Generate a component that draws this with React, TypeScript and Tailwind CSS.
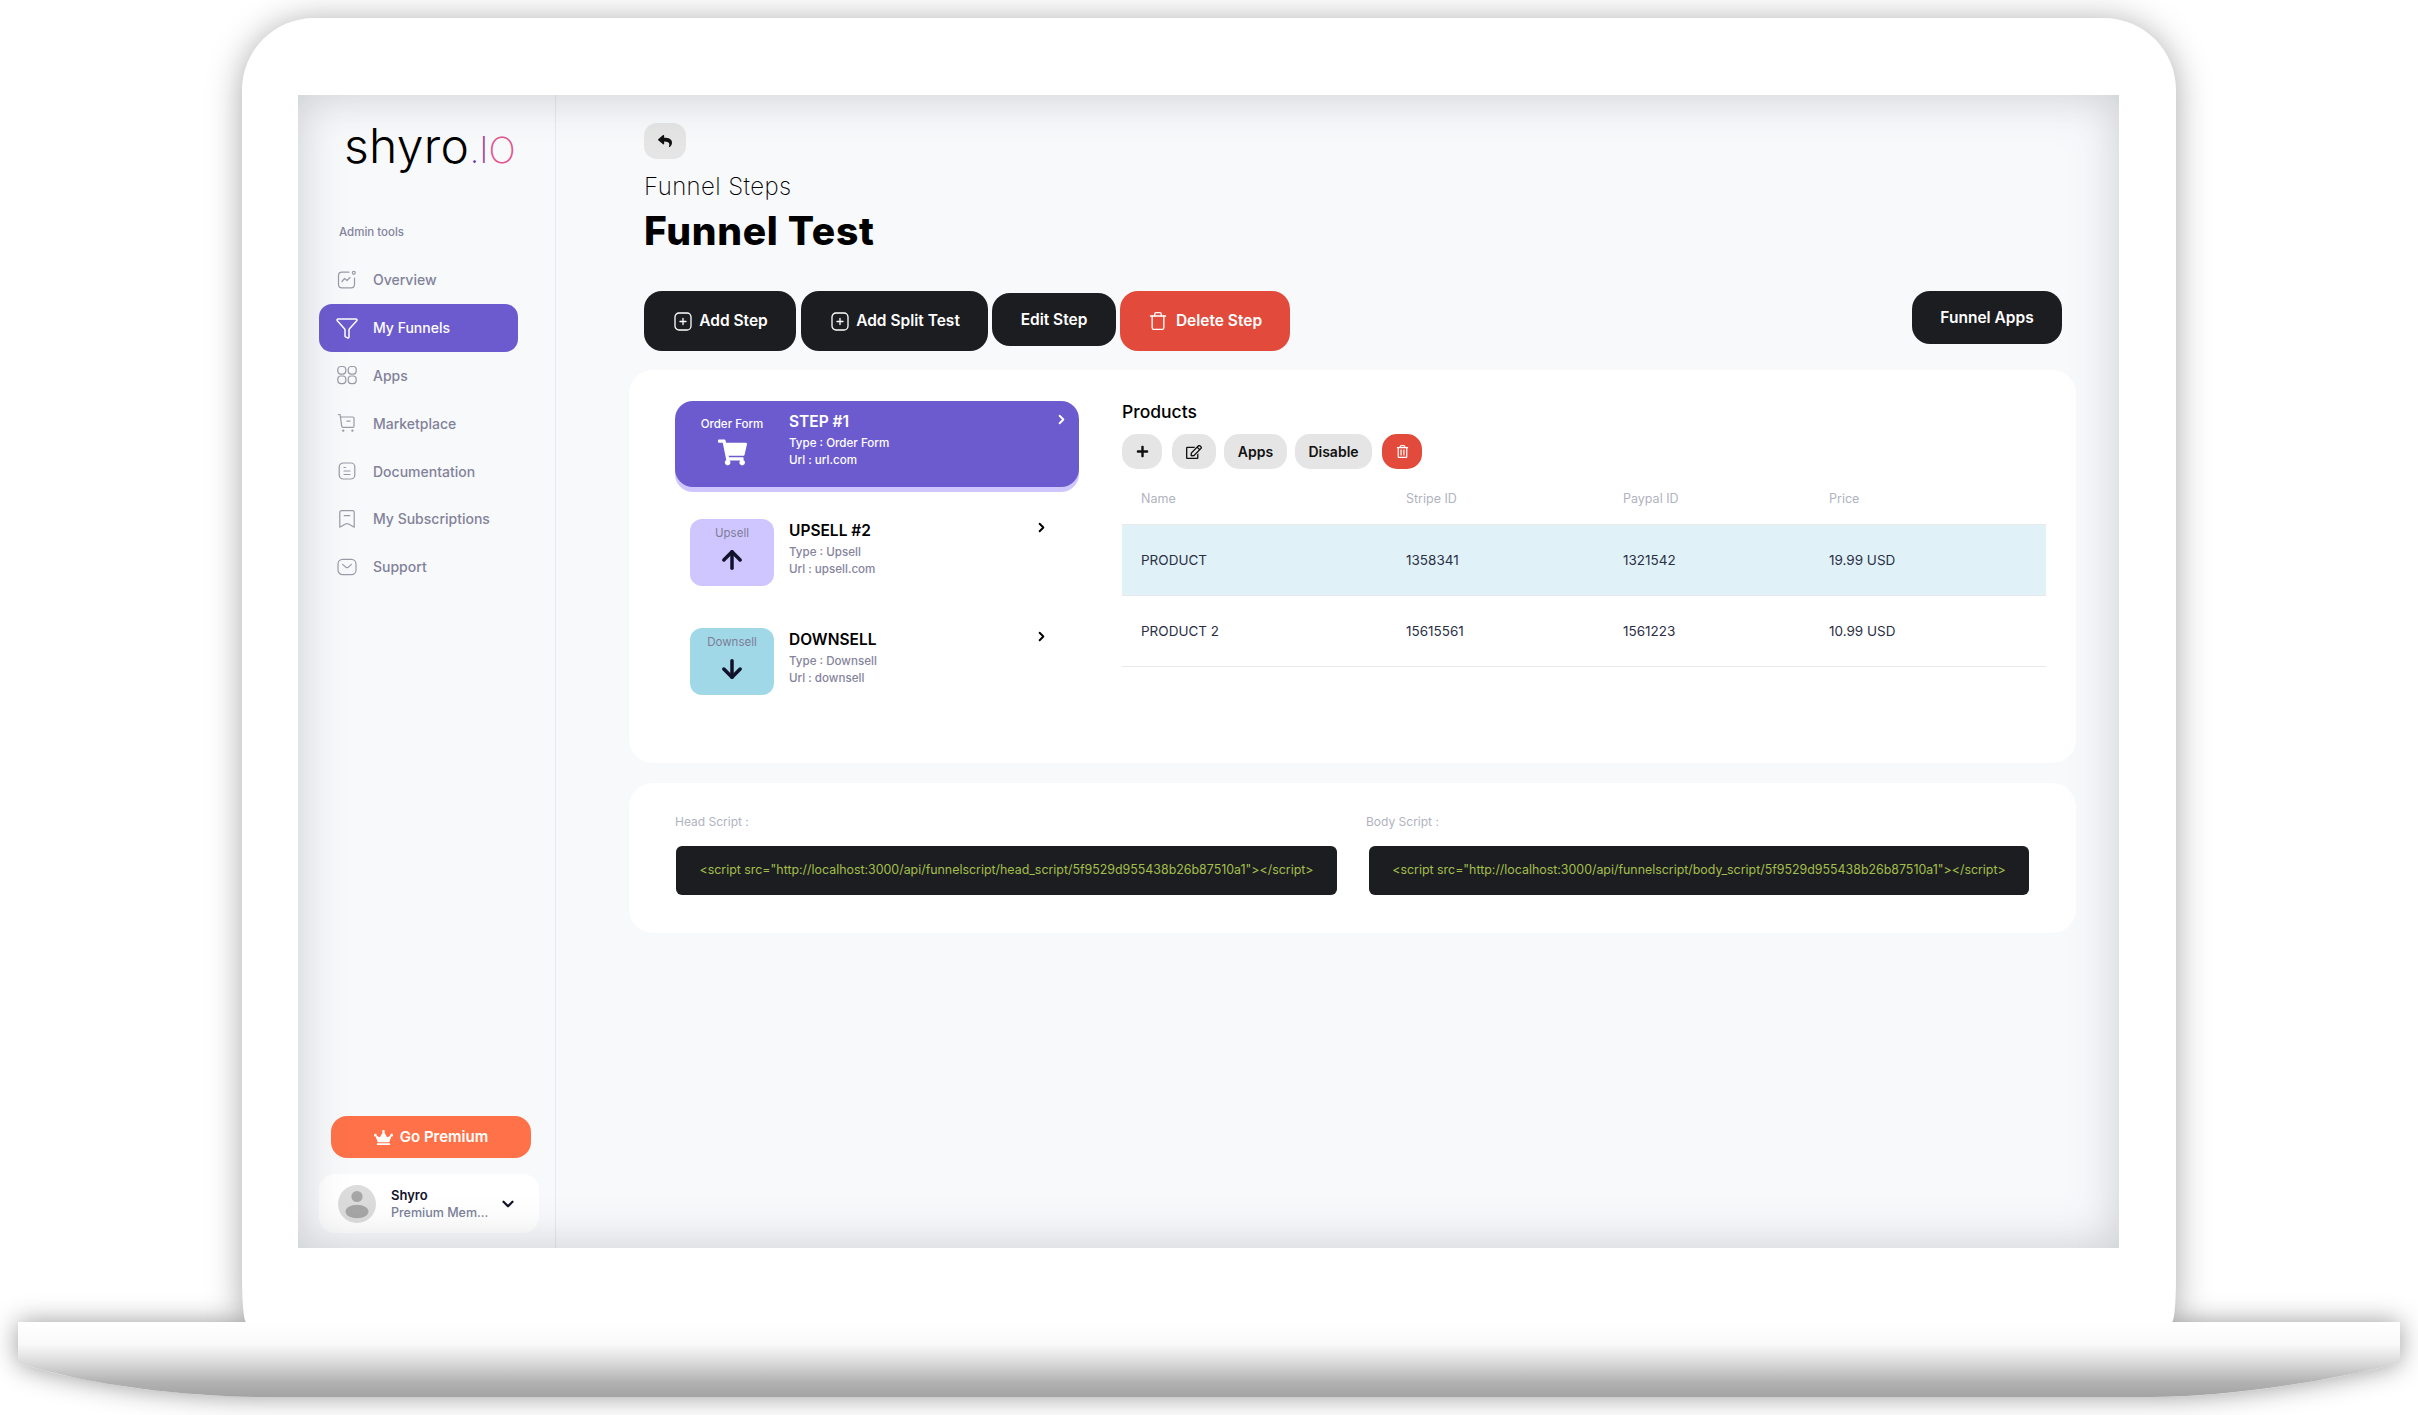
import React from "react";
import { ArrowUp, ArrowDown, ChevronRight, ChevronDown, Trash, Filter } from "lucide-react";
import { FaShoppingCart, FaReply, FaRegEdit, FaRegTrashAlt, FaCrown, FaPlus } from "react-icons/fa";

const BASE_PATH = "M0 0H2382V41C2300 62 2200 75 2133 75H249C180 75 80 66 0 41Z";

const Ico = ({ children }: { children: React.ReactNode }) => (
  <svg width="20" height="20" viewBox="0 0 20 20" fill="none" stroke="currentColor" strokeWidth="1.2" strokeLinecap="round" strokeLinejoin="round">
    {children}
  </svg>
);

const nav: { label: string; icon: React.ReactNode; active?: boolean }[] = [
  {
    label: "Overview",
    icon: (
      <Ico>
        <path d="M12 2.2H5C2.8 2.2 1.5 3.6 1.5 5.6v8.6c0 2.2 1.4 3.6 3.5 3.6h9c2.1 0 3.5-1.4 3.5-3.6V8" />
        <circle cx="16.8" cy="2.8" r="1.5" />
        <path d="M5 11.5l2.6-3 2.4 2 3-3" />
      </Ico>
    ),
  },
  {
    label: "My Funnels",
    active: true,
    icon: <Filter size={24} strokeWidth={1.5} className="-mx-[2px]" />,
  },
  {
    label: "Apps",
    icon: (
      <Ico>
        <rect x="0.8" y="1.5" width="8" height="7.6" rx="3" />
        <rect x="11.2" y="1.5" width="8" height="7.6" rx="3" />
        <rect x="0.8" y="11" width="8" height="7.6" rx="3" />
        <rect x="11.2" y="11" width="8" height="7.6" rx="3" />
      </Ico>
    ),
  },
  {
    label: "Marketplace",
    icon: (
      <Ico>
        <path d="M1.5 1.5h1.6l1.6 11.6c.1.8.7 1.3 1.5 1.3h9.6c.7 0 1.2-.5 1.2-1.2V5.2c0-.7-.5-1.2-1.2-1.2H3.3" />
        <path d="M10 8.2h3" />
        <circle cx="6.2" cy="17.6" r=".6" />
        <circle cx="15.4" cy="17.6" r=".6" />
      </Ico>
    ),
  },
  {
    label: "Documentation",
    icon: (
      <Ico>
        <rect x="2.2" y="2" width="15.6" height="16" rx="4" />
        <path d="M7 6.5h1.6M7 10h6M7 13.5h6" />
      </Ico>
    ),
  },
  {
    label: "My Subscriptions",
    icon: (
      <Ico>
        <path d="M4.5 1.6h11c1 0 1.7.7 1.7 1.7v14.9l-5.6-3.2c-1-.6-2.2-.6-3.2 0l-5.6 3.2V3.3c0-1 .7-1.7 1.7-1.7z" />
        <path d="M7.2 6.6h5.6" />
      </Ico>
    ),
  },
  {
    label: "Support",
    icon: (
      <Ico>
        <rect x="1" y="2.4" width="18" height="15.2" rx="4.6" />
        <path d="M5.5 7.4l3.4 2.8c.7.5 1.5.5 2.2 0l3.4-2.8" />
      </Ico>
    ),
  },
];

const AddIcon = () => (
  <svg width="18" height="19" viewBox="0 0 18 19" fill="none" stroke="currentColor" strokeWidth="1.3" strokeLinecap="round">
    <rect x="1" y="1" width="16" height="17" rx="4" />
    <path d="M9 6.5v6M6 9.5h6" />
  </svg>
);

const DarkButton = ({ children, className }: { children: React.ReactNode; className: string }) => (
  <button className={"flex items-center justify-center gap-[7px] rounded-[18px] bg-[#1c1d21] text-[15.5px] font-semibold text-white " + className}>
    {children}
  </button>
);

const Sidebar = () => (
  <aside className="flex w-[258px] shrink-0 flex-col border-r border-[#e6e8ec]">
    <div className="mt-[27px] ml-[46px] flex h-[70px] items-baseline leading-none">
      <span className="text-[48px] font-light tracking-[0.3px] text-black">shyro</span>
      <span className="text-[36px] font-extralight text-[#6b3fa0]">.</span>
      <span className="text-[36px] font-extralight text-[#a0459a]">I</span>
      <span className="text-[36px] font-extralight text-[#e0558f]">O</span>
    </div>
    <div className="mt-[32px] ml-[41px] h-[16px] text-[11.5px] leading-[16px] font-medium text-[#84849c]">Admin tools</div>
    <nav className="mt-[16px] ml-[21px] w-[199px]">
      {nav.map((n) => (
        <div
          key={n.label}
          className={
            "flex h-[47.8px] items-center gap-[16px] rounded-[13px] pl-[18px] text-[14px] font-medium " +
            (n.active ? "bg-[#6c5bcf] text-white" : "text-[#82829a]")
          }
        >
          <span className={n.active ? "text-white" : "text-[#9a9aa8]"}>{n.icon}</span>
          {n.label}
        </div>
      ))}
    </nav>
    <button className="mt-auto ml-[33px] flex h-[42px] w-[200px] items-center justify-center gap-[7px] rounded-[16px] bg-[#ff7249] text-[15px] font-semibold text-white">
      <FaCrown size={19} />
      Go Premium
    </button>
    <div className="mt-[16px] mb-[15px] ml-[21px] flex h-[59px] w-[220px] items-center rounded-[16px] bg-white pl-[19px]">
      <svg width="38" height="38" viewBox="0 0 38 38">
        <circle cx="19" cy="19" r="19" fill="#dcdcdc" />
        <circle cx="19" cy="11.5" r="5.6" fill="#a6a6a6" />
        <ellipse cx="19" cy="26.5" rx="11.5" ry="6.8" fill="#a6a6a6" />
      </svg>
      <div className="ml-[15px] w-[100px]">
        <div className="text-[13px] leading-[17px] font-semibold text-[#12132b]">Shyro</div>
        <div className="truncate text-[12.5px] leading-[17px] font-medium text-[#7b7f9a]">Premium Mem...</div>
      </div>
      <ChevronDown size={18} strokeWidth={3} className="ml-[8px] text-[#12132b]" />
    </div>
  </aside>
);

const StepInfo = ({ title, type, url, active }: { title: string; type: string; url: string; active?: boolean }) => (
  <div className="ml-[15px]">
    <div className={"text-[15.5px] leading-[20px] font-semibold " + (active ? "text-white" : "text-black")}>{title}</div>
    <div className={"mt-[3px] text-[11.6px] leading-[17px] font-medium " + (active ? "text-white" : "text-[#84849c]")}>{type}</div>
    <div className={"text-[11.6px] leading-[17px] font-medium " + (active ? "text-white" : "text-[#84849c]")}>{url}</div>
  </div>
);

const Steps = () => (
  <div className="w-[404px] shrink-0">
    <div className="flex h-[86px] items-start rounded-[18px] bg-[#6c5bcf] pl-[15px] shadow-[0_5px_0_#cfc6ff]">
      <div className="flex w-[84px] flex-col items-center pt-[15px] text-white">
        <div className="text-[11.5px] leading-[16px] font-medium">Order Form</div>
        <FaShoppingCart size={29} className="mt-[6px]" />
      </div>
      <div className="pt-[11px]">
        <StepInfo title="STEP #1" type="Type : Order Form" url="Url : url.com" active />
      </div>
      <ChevronRight size={15} strokeWidth={3} className="mt-[11px] mr-[10px] ml-auto text-white" />
    </div>
    <div className="mt-[32px] flex items-start pl-[15px]">
      <div className="flex h-[67px] w-[84px] flex-col items-center rounded-[12px] bg-[#cfc6ff] pt-[6px]">
        <div className="text-[11.5px] leading-[16px] text-[#7d7d96]">Upsell</div>
        <ArrowUp size={28} strokeWidth={3} className="mt-[5px] text-[#12132b]" />
      </div>
      <div className="pt-[2px]">
        <StepInfo title="UPSELL #2" type="Type : Upsell" url="Url : upsell.com" />
      </div>
      <ChevronRight size={15} strokeWidth={3} className="mt-[1px] mr-[30px] ml-auto text-black" />
    </div>
    <div className="mt-[42px] flex items-start pl-[15px]">
      <div className="flex h-[67px] w-[84px] flex-col items-center rounded-[12px] bg-[#a0d8e8] pt-[6px]">
        <div className="text-[11.5px] leading-[16px] text-[#7d7d96]">Downsell</div>
        <ArrowDown size={28} strokeWidth={3} className="mt-[5px] text-[#12132b]" />
      </div>
      <div className="pt-[2px]">
        <StepInfo title="DOWNSELL" type="Type : Downsell" url="Url : downsell" />
      </div>
      <ChevronRight size={15} strokeWidth={3} className="mt-[1px] mr-[30px] ml-auto text-black" />
    </div>
  </div>
);

const rows = [
  ["PRODUCT", "1358341", "1321542", "19.99 USD"],
  ["PRODUCT 2", "15615561", "1561223", "10.99 USD"],
];

const Products = () => (
  <div className="ml-[43px] w-[924px]">
    <div className="text-[17.5px] leading-[22px] font-medium text-black">Products</div>
    <div className="mt-[11px] flex h-[35px] text-[14px] font-semibold text-[#111]">
      <button className="flex w-[40px] items-center justify-center rounded-[15px] bg-[#e5e5e5]"><FaPlus size={13} /></button>
      <button className="ml-[10px] flex w-[44px] items-center justify-center rounded-[15px] bg-[#e5e5e5]"><FaRegEdit size={16} /></button>
      <button className="ml-[8px] w-[63px] rounded-[15px] bg-[#e5e5e5]">Apps</button>
      <button className="ml-[8px] w-[77px] rounded-[15px] bg-[#e5e5e5]">Disable</button>
      <button className="ml-[10px] flex w-[40px] items-center justify-center rounded-[15px] bg-[#e24a3b] text-white"><FaRegTrashAlt size={13} /></button>
    </div>
    <div className="mt-[22px] grid h-[34px] grid-cols-[265px_217px_206px_1fr] border-b border-[#e8eaee] pl-[19px] text-[12.5px] leading-[16px] text-[#b0b3c0]">
      <div>Name</div>
      <div>Stripe ID</div>
      <div>Paypal ID</div>
      <div>Price</div>
    </div>
    {rows.map((r, i) => (
      <div
        key={r[0]}
        className={
          "grid h-[71px] grid-cols-[265px_217px_206px_1fr] items-center border-b border-[#e6e9ed] pl-[19px] text-[13.5px] text-[#2b2f45] " +
          (i === 0 ? "bg-[#e0f2f7]" : "")
        }
      >
        {r.map((c) => (
          <div key={c}>{c}</div>
        ))}
      </div>
    ))}
  </div>
);

const Script = ({ label, src, boxClass }: { label: string; src: string; boxClass: string }) => (
  <div className="w-[691px] shrink-0">
    <div className="h-[16px] text-[12px] leading-[16px] text-[#b0b3c0]">{label}</div>
    <div className={"mt-[16px] flex h-[49px] items-center justify-center rounded-[6px] bg-[#1c1d21] text-[12.4px] whitespace-nowrap text-[#a3bf4b] " + boxClass}>
      {src}
    </div>
  </div>
);

const Main = () => (
  <main className="min-w-0 flex-1 pt-[28px] pr-[43px] pl-[73px]">
    <div className="pr-[14px] pl-[15px]">
      <button className="flex h-[36px] w-[42px] items-center justify-center rounded-[13px] bg-[#e5e5e5] text-[#111]">
        <FaReply size={14} />
      </button>
      <div className="mt-[12px] h-[32px] text-[24px] leading-[32px] font-[250] tracking-[0.4px] text-black">Funnel Steps</div>
      <div className="mt-[6px] h-[44px] text-[39px] leading-[44px] font-extrabold tracking-[0.7px] text-black">Funnel Test</div>
      <div className="mt-[38px] flex h-[60px] items-start">
        <DarkButton className="h-[60px] w-[152px] pl-[2px]"><AddIcon />Add Step</DarkButton>
        <DarkButton className="ml-[5px] h-[60px] w-[187px] pl-[2px]"><AddIcon />Add Split Test</DarkButton>
        <DarkButton className="mt-[2px] ml-[4px] h-[53px] w-[124px]">Edit Step</DarkButton>
        <button className="ml-[4px] flex h-[60px] w-[170px] items-center justify-center gap-[8px] rounded-[18px] bg-[#e24a3b] text-[15.5px] font-semibold text-white">
          <Trash size={20} strokeWidth={1.6} />Delete Step
        </button>
        <DarkButton className="ml-auto h-[53px] w-[150px]">Funnel Apps</DarkButton>
      </div>
    </div>
    <section className="mt-[19px] flex h-[393px] items-start rounded-[24px] bg-white pt-[31px] pl-[46px]">
      <Steps />
      <Products />
    </section>
    <section className="mt-[20px] flex h-[150px] rounded-[24px] bg-white pt-[31px] pl-[46px]">
      <Script
        label="Head Script :"
        src={'<script src="http://localhost:3000/api/funnelscript/head_script/5f9529d955438b26b87510a1"></script>'}
        boxClass="ml-[1px] w-[661px]"
      />
      <Script
        label="Body Script :"
        src={'<script src="http://localhost:3000/api/funnelscript/body_script/5f9529d955438b26b87510a1"></script>'}
        boxClass="ml-[3px] w-[660px]"
      />
    </section>
  </main>
);

export default function App() {
  return (
    <div className="relative h-[1415px] w-[2418px] overflow-hidden bg-white font-['Inter',sans-serif]">
      <div className="relative z-10 mt-[18px] ml-[242px] h-[1304px] w-[1934px] rounded-t-[72px] rounded-b-[4px_45px] bg-white pt-[77px] pl-[56px] shadow-[0_3px_34px_rgba(0,0,0,0.34)]">
        <div className="relative flex h-[1153px] w-[1821px] bg-[#f8f9fb]">
          <Sidebar />
          <Main />
          <div className="pointer-events-none absolute inset-0 shadow-[inset_0_0_48px_rgba(70,75,85,0.26)]" />
        </div>
      </div>
      <div className="relative ml-[18px] h-[75px] w-[2382px]">
        <svg className="absolute inset-0 z-0 overflow-visible drop-shadow-[0_0_13px_rgba(0,0,0,0.4)]" width="2382" height="75" viewBox="0 0 2382 75">
          <path d={BASE_PATH} fill="#fff" />
        </svg>
        <svg className="absolute inset-0 z-20" width="2382" height="75" viewBox="0 0 2382 75">
          <defs>
            <linearGradient id="baseFill" x1="0" y1="0" x2="0" y2="1">
              <stop offset="0" stopColor="#ffffff" />
              <stop offset="0.3" stopColor="#f9f9f9" />
              <stop offset="0.55" stopColor="#d9d9d9" />
              <stop offset="0.8" stopColor="#b2b2b2" />
              <stop offset="1" stopColor="#a3a3a3" />
            </linearGradient>
          </defs>
          <path d={BASE_PATH} fill="url(#baseFill)" />
        </svg>
      </div>
    </div>
  );
}
